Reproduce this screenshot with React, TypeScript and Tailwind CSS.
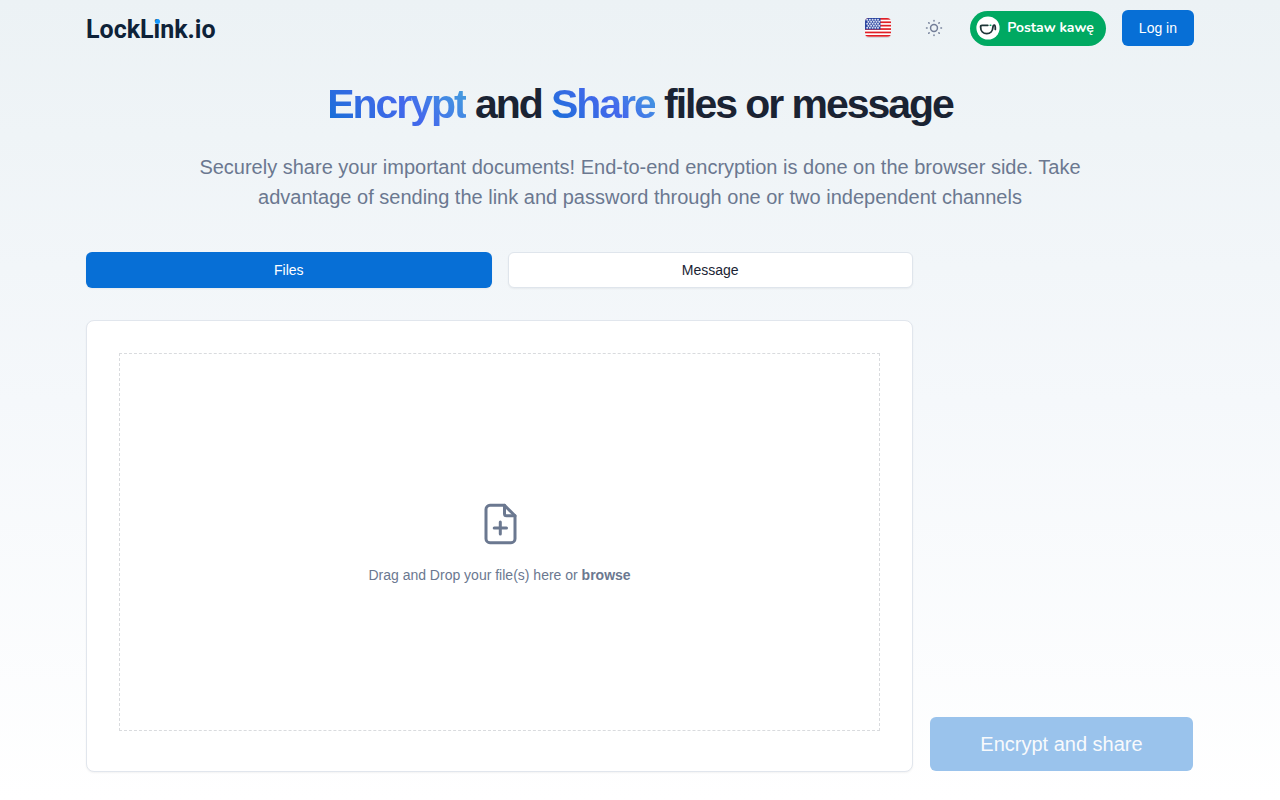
import { useState } from "react";
import type { ReactNode } from "react";

const tabs = ["Files", "Message"];

const Logo = () => (
  <a
    href="#"
    className="mt-1 font-['Roboto',sans-serif] text-[25px] leading-8 font-bold text-[#0e2238]"
  >
    LockL
    <span className="relative">
      i
      <span className="absolute top-[4px] left-px h-[5px] w-[5px] rounded-full bg-[#1499ff]" />
    </span>
    nk.io
  </a>
);

const FlagIcon = () => (
  <svg viewBox="0 0 26 20" className="h-5 w-[26px]">
    <defs>
      <clipPath id="flag">
        <rect width="26" height="19" rx="4" />
      </clipPath>
    </defs>
    <rect y="1" width="26" height="19" rx="4" fill="#d5d9dc" />
    <g clipPath="url(#flag)">
      <rect width="26" height="19" fill="#fff" />
      {[0, 3.4, 6.8, 10.2, 13.6, 17].map((y) => (
        <rect key={y} y={y} width="26" height="1.7" fill="#e01f26" />
      ))}
      <rect width="15.5" height="11.5" fill="#2b45a0" />
      {[1.8, 3.8, 5.8, 7.8, 9.8].map((y, row) =>
        [2.2, 4.9, 7.6, 10.3, 13].map((x) => (
          <circle key={x} cx={x + (row % 2 ? 1.2 : 0)} cy={y} r="1" fill="#d5dcf0" />
        ))
      )}
    </g>
  </svg>
);

const SunIcon = () => (
  <svg
    viewBox="0 0 24 24"
    className="h-[18px] w-[18px]"
    fill="none"
    stroke="currentColor"
    strokeWidth="2"
    strokeLinecap="round"
  >
    <circle cx="12" cy="12" r="4.6" />
    <path d="M12 2v.8M12 21.2v.8M2 12h.8M21.2 12h.8M5 5l.5.5M18.5 18.5l.5.5M5 19l.5-.5M18.5 5.5l.5-.5" />
  </svg>
);

const CupIcon = () => (
  <svg viewBox="0 0 24 24" className="h-6 w-6" fill="none" strokeLinecap="round" strokeLinejoin="round">
    <circle cx="12" cy="12" r="11.6" fill="#fff" />
    <path
      d="M11.8 9.3H6Q4.6 9.3 4.6 10.9C4.6 15 7.3 17.6 10.8 17.6C14.3 17.6 16.7 15 16.9 11.5C17 9.7 17.7 8.9 18.4 9.1C19.4 9.4 19.4 11 19.3 13.4"
      stroke="#1d3437"
      strokeWidth="1.8"
    />
    <path d="M14.2 9.3h.6" stroke="#00a962" strokeWidth="1.6" />
  </svg>
);

const FilePlusIcon = () => (
  <svg
    viewBox="0 0 48 48"
    className="h-12 w-12"
    fill="none"
    stroke="currentColor"
    strokeWidth="3"
    strokeLinecap="round"
    strokeLinejoin="round"
  >
    <path d="M28.5 5.300H14a4 4 0 0 0-4 4v29.400a4 4 0 0 0 4 4h21a4 4 0 0 0 4-4V15.800z" />
    <path d="M28.500 5.300v8.500a2 2 0 0 0 2 2H39M24.300 22v12M18.200 28h12.300" />
  </svg>
);

const Gradient = ({ children }: { children: ReactNode }) => (
  <span className="bg-linear-45 from-[#076fd6] via-[#4468ec] via-55% to-[#46a3db] bg-clip-text text-transparent">
    {children}
  </span>
);

const Navbar = () => (
  <header className="flex h-14 items-center justify-between">
    <Logo />
    <div className="flex items-center">
      <button type="button" aria-label="Change language" className="mr-[34px]">
        <FlagIcon />
      </button>
      <button type="button" aria-label="Toggle theme" className="mr-[27px] text-[#737e98]">
        <SunIcon />
      </button>
      <a
        href="#"
        className="mr-4 flex h-[35px] items-center gap-[7px] rounded-full bg-[#00a962] pr-3 pl-[6px] font-['Nunito','Open_Sans',sans-serif] text-sm font-bold text-white"
      >
        <CupIcon />
        Postaw kawę
      </a>
      <button
        type="button"
        className="h-9 rounded-md bg-[#076fd6] px-[17px] text-sm text-white"
      >
        Log in
      </button>
    </div>
  </header>
);

const App = () => {
  const [active, setActive] = useState("Files");

  return (
    <div className="min-h-screen bg-linear-to-b from-[#ecf2f5] via-[#f5f8fb] to-white px-6 font-['Liberation_Sans',Arial,sans-serif] text-[#1a2333]">
      <div className="mx-auto max-w-[1108px]">
        <Navbar />
        <main>
          {/* HERO */}
          <div className="text-center">
            <h1 className="mt-6 text-[41px] leading-12 font-bold tracking-tighter">
              <Gradient>Encrypt</Gradient> and <Gradient>Share</Gradient> files or message
            </h1>
            <p className="mx-auto mt-6 max-w-[900px] text-xl leading-[30px] text-[#6b7890]">
              Securely share your important documents! End-to-end encryption is
              done on the browser side. Take advantage of sending the link and
              password through one or two independent channels
            </p>
          </div>

          <div className="mt-10 grid grid-cols-4 gap-4">
            <div className="col-span-3">
              {/* TABS */}
              <div className="grid grid-cols-2 gap-4">
                {tabs.map((tab) => (
                  <button
                    key={tab}
                    type="button"
                    onClick={() => setActive(tab)}
                    className={
                      active === tab
                        ? "h-9 rounded-md bg-[#076fd6] text-sm text-white shadow-xs"
                        : "h-9 rounded-md border border-[#dfe5ec] bg-white text-sm shadow-xs"
                    }
                  >
                    {tab}
                  </button>
                ))}
              </div>

              {/* DROPZONE */}
              <div className="mt-8 rounded-lg border border-[#e1e6ed] bg-white px-8 pt-8 pb-10 shadow-xs">
                <label className="flex h-[378px] cursor-pointer flex-col items-center justify-center border border-dashed border-[#d9dbde] text-sm text-[#6b7890]">
                  <input type="file" multiple className="sr-only" />
                  <FilePlusIcon />
                  <span className="mt-[17px]">
                    Drag and Drop your file(s) here or <b>browse</b>
                  </span>
                </label>
              </div>
            </div>

            <div className="flex items-end p-px">
              <button
                type="button"
                disabled
                className="h-[54px] w-full rounded-md bg-[#9ac3ec] text-xl text-[#f8fafc]"
              >
                Encrypt and share
              </button>
            </div>
          </div>
        </main>
      </div>
    </div>
  );
};

export default App;
